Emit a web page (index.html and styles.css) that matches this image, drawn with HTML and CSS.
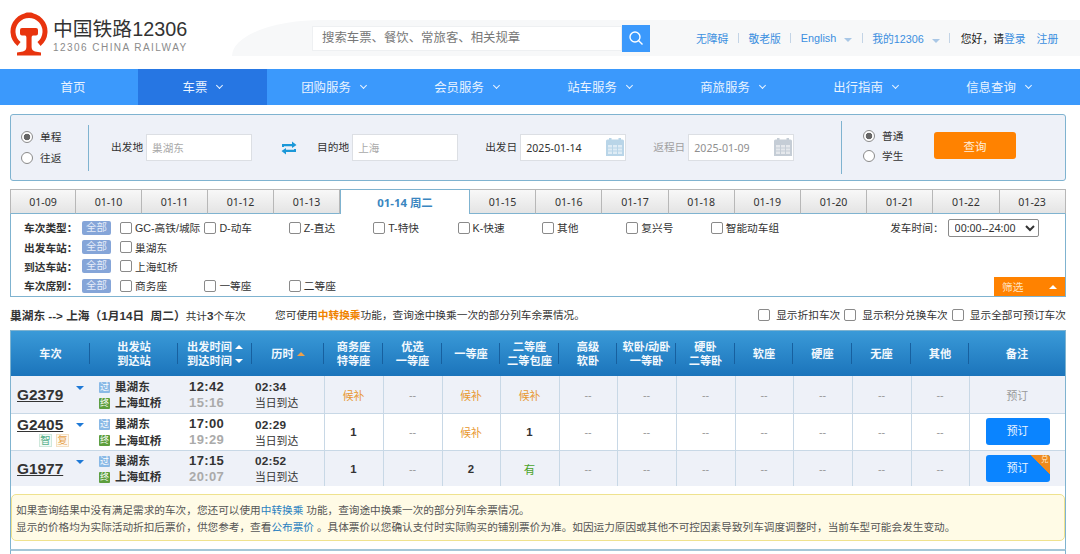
FILE: index.html
```html
<!DOCTYPE html>
<html lang="zh-CN">
<head>
  <meta charset="UTF-8" />
  <title>车票查询 - 中国铁路12306</title>
  <link rel="stylesheet" href="styles.css">
</head>
<body>

  <header class="topbar">
    <a class="logo">
      <svg class="logo-mark" viewBox="0 0 38 44" aria-hidden="true">
        <path d="M9 32 A16 16 0 1 1 29 32" fill="none" stroke="#e8340e" stroke-width="5"/>
        <rect x="14.5" y="0.5" width="9" height="5" rx="2.5" fill="#e8340e"/>
        <path d="M10 18 Q10 16 12 16 H26 Q28 16 28 18 V21.5 Q28 23.5 26 23.5 H23 Q21.6 23.5 21.6 25.5 V35 Q21.6 38.5 25 39.5 L31 40.5 V43.5 H7 V40.5 L13 39.5 Q16.4 38.5 16.4 35 V25.5 Q16.4 23.5 15 23.5 H12 Q10 23.5 10 21.5 Z" fill="#e8340e"/>
      </svg>
      <span class="logo-text">
        <span class="logo-name">中国铁路12306</span>
        <span class="logo-en">12306 CHINA RAILWAY</span>
      </span>
    </a>
    <div class="topbar-band">
      <div class="site-search">
        <input type="text" placeholder="搜索车票、餐饮、常旅客、相关规章" />
        <button type="button" aria-label="搜索">
          <svg viewBox="0 0 16 16" width="16" height="16"><circle cx="7" cy="7" r="5" fill="none" stroke="#fff" stroke-width="1.4"/><path d="M10.7 10.7 L14.5 14.5" stroke="#fff" stroke-width="1.4"/></svg>
        </button>
      </div>
      <div class="top-links">
        <a>无障碍</a><i class="sep"></i>
        <a>敬老版</a><i class="sep"></i>
        <a class="has-caret">English</a><i class="sep"></i>
        <a class="has-caret">我的12306</a><i class="sep"></i>
        <span class="hello">您好，请<a>登录</a></span>
        <a class="reg">注册</a>
      </div>
    </div>
  </header>

  <nav class="mainnav">
    <a>首页</a>
    <a class="active chev">车票</a>
    <a class="chev">团购服务</a>
    <a class="chev">会员服务</a>
    <a class="chev">站车服务</a>
    <a class="chev">商旅服务</a>
    <a class="chev">出行指南</a>
    <a class="chev">信息查询</a>
  </nav>

  <main class="content">

    <section class="query">
      <div class="query-radios">
        <label><input type="radio" name="trip" checked /> 单程</label>
        <label><input type="radio" name="trip" /> 往返</label>
      </div>
      <div class="query-fields">
        <label class="field from">出发地<input type="text" placeholder="巢湖东" /></label>
        <svg class="swap" viewBox="0 0 16 14" width="16" height="14" aria-hidden="true">
          <path d="M1 6 V3 H11 V0.5 L15.5 4 L11 7 V5.2 H3 V6 Z M15 8 V11 H5 V13.5 L0.5 10 L5 7 V8.8 H13 V8 Z" fill="#1b98d8"/>
        </svg>
        <label class="field to">目的地<input type="text" placeholder="上海" /></label>
        <label class="field date">出发日<input type="text" value="2025-01-14" />
          <svg class="cal" viewBox="0 0 20 20" width="20" height="20" aria-hidden="true"><use href="#cal-icon"/></svg>
        </label>
        <label class="field date back">返程日<input type="text" value="2025-01-09" />
          <svg class="cal" viewBox="0 0 20 20" width="20" height="20" aria-hidden="true"><use href="#cal-icon"/></svg>
        </label>
      </div>
      <div class="query-radios kind">
        <label><input type="radio" name="kind" checked /> 普通</label>
        <label><input type="radio" name="kind" /> 学生</label>
      </div>
      <button class="query-btn" type="button">查询</button>
    </section>

    <ul class="datetabs">
      <li>01-09</li><li>01-10</li><li>01-11</li><li>01-12</li><li>01-13</li>
      <li class="active">01-14 周二</li>
      <li>01-15</li><li>01-16</li><li>01-17</li><li>01-18</li><li>01-19</li>
      <li>01-20</li><li>01-21</li><li>01-22</li><li>01-23</li>
    </ul>

    <section class="filter">
      <div class="filter-row">
        <b>车次类型：</b><span class="chip">全部</span>
        <div class="filter-opts">
          <label><input type="checkbox" />GC-高铁/城际</label>
          <label><input type="checkbox" />D-动车</label>
          <label><input type="checkbox" />Z-直达</label>
          <label><input type="checkbox" />T-特快</label>
          <label><input type="checkbox" />K-快速</label>
          <label><input type="checkbox" />其他</label>
          <label><input type="checkbox" />复兴号</label>
          <label><input type="checkbox" />智能动车组</label>
        </div>
        <label class="depart-time">发车时间：
          <select><option>00:00--24:00</option></select>
        </label>
      </div>
      <div class="filter-row">
        <b>出发车站：</b><span class="chip">全部</span>
        <div class="filter-opts"><label><input type="checkbox" />巢湖东</label></div>
      </div>
      <div class="filter-row">
        <b>到达车站：</b><span class="chip">全部</span>
        <div class="filter-opts"><label><input type="checkbox" />上海虹桥</label></div>
      </div>
      <div class="filter-row">
        <b>车次席别：</b><span class="chip">全部</span>
        <div class="filter-opts">
          <label><input type="checkbox" />商务座</label>
          <label><input type="checkbox" />一等座</label>
          <label><input type="checkbox" />二等座</label>
        </div>
      </div>
      <div class="filter-toggle">筛选<i></i></div>
    </section>

    <div class="summary">
      <p class="summary-count"><b>巢湖东 --&gt; 上海（1月14日&nbsp; 周二）</b>共计<b>3</b>个车次</p>
      <p class="summary-tip">您可使用<b>中转换乘</b>功能，查询途中换乘一次的部分列车余票情况。</p>
      <div class="summary-opts">
        <label><input type="checkbox" />显示折扣车次</label>
        <label><input type="checkbox" />显示积分兑换车次</label>
        <label><input type="checkbox" />显示全部可预订车次</label>
      </div>
    </div>

    <div class="results">
      <table class="trains">
        <colgroup>
          <col class="c-no"><col class="c-st"><col class="c-tm"><col class="c-du"><col class="c-s">
          <col class="c-s"><col class="c-s2"><col class="c-s"><col class="c-s2"><col class="c-s">
          <col class="c-s"><col class="c-s2"><col class="c-s"><col class="c-s"><col class="c-s2"><col>
        </colgroup>
        <thead>
          <tr>
            <th>车次</th>
            <th>出发站<br>到达站</th>
            <th class="th-time"><span>出发时间<i class="up"></i><br>到达时间<i class="down"></i></span></th>
            <th>历时<i class="up orange"></i></th>
            <th>商务座<br>特等座</th>
            <th>优选<br>一等座</th>
            <th>一等座</th>
            <th>二等座<br>二等包座</th>
            <th>高级<br>软卧</th>
            <th>软卧/动卧<br>一等卧</th>
            <th>硬卧<br>二等卧</th>
            <th>软座</th>
            <th>硬座</th>
            <th>无座</th>
            <th>其他</th>
            <th class="last">备注</th>
          </tr>
        </thead>
        <tbody>
          <tr class="odd">
            <td class="no"><div class="no-line"><a>G2379</a><i class="drop"></i></div></td>
            <td class="st"><div><i class="tag pass">过</i>巢湖东</div><div><i class="tag end">终</i>上海虹桥</div></td>
            <td class="tm"><strong>12:42</strong><em>15:16</em></td>
            <td class="du"><strong>02:34</strong><span>当日到达</span></td>
            <td class="wait">候补</td><td>--</td><td class="wait">候补</td><td class="wait">候补</td>
            <td>--</td><td>--</td><td>--</td><td>--</td><td>--</td><td>--</td><td>--</td>
            <td class="off">预订</td>
          </tr>
          <tr>
            <td class="no"><div class="no-line"><a>G2405</a><i class="drop"></i></div>
              <div class="marks"><i class="mark zhi">智</i><i class="mark fu">复</i></div></td>
            <td class="st"><div><i class="tag pass">过</i>巢湖东</div><div><i class="tag end">终</i>上海虹桥</div></td>
            <td class="tm"><strong>17:00</strong><em>19:29</em></td>
            <td class="du"><strong>02:29</strong><span>当日到达</span></td>
            <td class="num">1</td><td>--</td><td class="wait">候补</td><td class="num">1</td>
            <td>--</td><td>--</td><td>--</td><td>--</td><td>--</td><td>--</td><td>--</td>
            <td><a class="book">预订</a></td>
          </tr>
          <tr class="odd">
            <td class="no"><div class="no-line"><a>G1977</a><i class="drop"></i></div></td>
            <td class="st"><div><i class="tag pass">过</i>巢湖东</div><div><i class="tag end">终</i>上海虹桥</div></td>
            <td class="tm"><strong>17:15</strong><em>20:07</em></td>
            <td class="du"><strong>02:52</strong><span>当日到达</span></td>
            <td class="num">1</td><td>--</td><td class="num">2</td><td class="have">有</td>
            <td>--</td><td>--</td><td>--</td><td>--</td><td>--</td><td>--</td><td>--</td>
            <td><a class="book points">预订<i>兑</i></a></td>
          </tr>
        </tbody>
      </table>

      <div class="notice">
        <p>如果查询结果中没有满足需求的车次，您还可以使用<a>中转换乘</a> 功能，查询途中换乘一次的部分列车余票情况。</p>
        <p>显示的价格均为实际活动折扣后票价，供您参考，查看<a>公布票价</a> 。具体票价以您确认支付时实际购买的铺别票价为准。如因运力原因或其他不可控因素导致列车调度调整时，当前车型可能会发生变动。</p>
      </div>
    </div>
    <div class="more"></div>
  </main>

  <svg class="sprite" aria-hidden="true">
    <symbol id="cal-icon" viewBox="0 0 20 20">
      <path d="M1 4 Q1 2.5 2.5 2.5 H4 V1 H6.5 V2.5 H13.5 V1 H16 V2.5 H17.5 Q19 2.5 19 4 V19 H1 Z" fill="currentColor"/>
      <path d="M3 8 H17 V17 H3 Z" fill="#fff" opacity=".55"/>
      <path d="M3 11 H17 M3 14 H17 M7.5 8 V17 M12.5 8 V17" stroke="currentColor" stroke-width="1"/>
    </symbol>
  </svg>

</body>
</html>
```

FILE: styles.css
```css
/* base */
*, *::before, *::after { box-sizing: border-box; }

html, body {
  margin: 0; padding: 0; height: 554px;
  overflow: hidden;
  background: #fff;
  font-family: "Liberation Sans", "Noto Sans CJK SC", sans-serif;
  font-size: 10.8px;
  color: #333;
}
p { margin: 0; }
i, em { font-style: normal; }
.sprite { width: 0; height: 0; display: block; overflow: hidden; }

input[type="radio"], input[type="checkbox"] {
  appearance: none;
  margin: 0;
  background: #fff;
  border: 1px solid #8a8a8a;
  flex: none;
}
input[type="radio"] { width: 12px; height: 12px; border-radius: 50%; }
input[type="radio"]:checked { background: radial-gradient(circle, #666 0 3px, #fff 3.6px); }
input[type="checkbox"] { width: 12px; height: 12px; border-radius: 2px; }

/* header */
.topbar { height: 69px; display: flex; align-items: flex-start; }
.logo { display: flex; gap: 5px; padding: 12px 0 0 10px; width: 232px; flex: none; }
.logo-mark { width: 38px; height: 44px; flex: none; }
.logo-text { display: flex; flex-direction: column; }
.logo-name { font-size: 19.8px; line-height: 24px; color: #333; margin-top: 5px; white-space: nowrap; }
.logo-en { font-size: 10px; line-height: 12px; letter-spacing: 1.45px; color: #8b8b8b; margin-top: 1px; white-space: nowrap; }

.topbar-band {
  flex: 1;
  height: 36px;
  margin-top: 20px;
  padding-left: 80px;
  display: flex;
  align-items: center;
  background: #f7f8f9;
  border-top-left-radius: 90px 36px;
}
.site-search { display: flex; width: 338px; height: 27px; flex: none; }
.site-search input {
  width: 310px; height: 25px; margin-top: 1px; padding: 0 9px;
  border: 1px solid #eef0f2; outline: none; background: #fff;
  font: 12.4px "Liberation Sans", "Noto Sans CJK SC", sans-serif;
}
.site-search input::placeholder { color: #777; }
.site-search button { width: 28px; height: 27px; padding: 0; border: none; background: #3b99fc; display: flex; align-items: center; justify-content: center; }

.top-links { margin-left: 46px; display: flex; align-items: center; font-size: 10.8px; white-space: nowrap; }
.top-links a { color: #3b8fe0; }
.top-links .sep { width: 1px; height: 10px; background: #c3d4e6; margin: 0 9.5px; }
.top-links .has-caret::after {
  content: ""; display: inline-block; margin-left: 8px; vertical-align: 0;
  border: 4.5px solid transparent; border-top: 4px solid #a9c7e6; border-bottom: 0;
}
.top-links .hello { color: #222; margin-left: 1px; }
.top-links .reg { margin-left: 11px; }

/* main nav */
.mainnav {
  height: 36px;
  padding-left: 8px;
  display: grid;
  grid-template-columns: 130px 129px repeat(6, 133px);
  background: #3b99fc;
  color: #fff;
  font-size: 12.4px;
}
.mainnav a { display: flex; align-items: center; justify-content: center; color: #e9f3ff; }
.mainnav .active { background: #2676e3; }
.mainnav .chev::after {
  content: ""; width: 5px; height: 5px; margin: -3px 0 0 10px;
  border-right: 1.2px solid #e9f3ff; border-bottom: 1.2px solid #e9f3ff;
  transform: rotate(45deg);
}

/* content column */
.content { padding: 9px 14px 0 10px; }

/* query panel */
.query {
  height: 67px;
  display: flex;
  align-items: center;
  background: #eef1f8;
  border: 1px solid #7fb3d0;
  border-radius: 3px;
  position: relative;
}
.query label { display: flex; align-items: center; white-space: nowrap; font-size: 10.7px; line-height: 15px; }
.query-radios { width: 78px; height: 46px; padding-left: 10px; display: flex; flex-direction: column; justify-content: center; gap: 6px; border-right: 1px solid #7fb3d0; flex: none; }
.query-radios input { margin-right: 7px; }
.query-radios.kind { border: none; border-left: 1px solid #7fb3d0; width: 92px; height: 53px; padding: 0 0 3px 21px; gap: 5px; flex: none; }
.query-fields { display: flex; align-items: center; width: 752px; padding-left: 22px; flex: none; }
.field { position: relative; }
.field input {
  width: 106px; height: 27px; margin-left: 3px; padding: 0 5px;
  border: 1px solid #dcdfe4; outline: none; background: #fff; color: #333;
  font: 10.6px "Noto Sans", "Noto Sans CJK SC", sans-serif;
}
.field input::placeholder { color: #a9a9a9; }
.swap { margin: 0 20px 0 29px; flex: none; }
.field.date { margin-left: 27px; color: #333; }
.field.date.back { margin-left: 27px; color: #a0a0a0; }
.field.back input { color: #8f8f8f; }
.cal { position: absolute; right: 1px; top: 3px; color: #b9d5e8; }
.back .cal { color: #c5cdd6; }
.query-btn {
  width: 82px; height: 27px; margin: -4px 0 0 1px; padding: 0;
  border: none; border-radius: 3px; background: #ff8200; color: #ffeeda;
  font: 11.5px "Noto Sans CJK SC", sans-serif;
}

/* date tabs */
.datetabs {
  list-style: none; margin: 8px 0 0; padding: 0;
  height: 25px;
  display: grid;
  grid-template-columns: repeat(5, 66px) 130px repeat(9, 66.2px);
  font: 10.6px "Noto Sans", "Noto Sans CJK SC", sans-serif;
  color: #333;
}
.datetabs li {
  display: flex; align-items: center; justify-content: center;
  background: linear-gradient(#f8f8f8, #e4e4e4);
  border: 1px solid #b7b7b7; border-left: 0; border-bottom: 1px solid #7fb3d0;
}
.datetabs li:first-child { border-left: 1px solid #b7b7b7; }
.datetabs .active {
  background: #fff; color: #3a86c0; font-weight: 700; font-size: 11.4px;
  border: 1px solid #7fb3d0; border-bottom: 0;
}

/* filter */
.filter {
  height: 83px; padding: 4px 0 0 13px;
  position: relative;
  border: 1px solid #7fb3d0; border-top: 0;
  font-size: 10.7px;
}
.filter-row { height: 19.4px; display: flex; align-items: center; white-space: nowrap; }
.filter-row b { width: 58px; flex: none; color: #333; }
.chip { width: 29px; height: 14px; flex: none; border-radius: 2px; background: #85a5d8; color: #e4ecf8; text-align: center; line-height: 14px; font-size: 10.4px; }
.filter-opts { margin-left: 9px; display: grid; grid-template-columns: repeat(8, 84.4px); }
.filter-opts label { display: flex; align-items: center; gap: 3px; }
.depart-time { margin-left: 95px; display: flex; align-items: center; gap: 0; }
.depart-time select { width: 91px; height: 18px; margin-left: 4px; padding: 0 0 0 2px; font: 10.6px "Noto Sans", sans-serif; color: #333; background: #fff; border: 1px solid #8a8a8a; border-radius: 2px; }
.filter-toggle {
  position: absolute; right: 0; bottom: 0;
  width: 71px; height: 19px; padding: 0 8px;
  display: flex; align-items: center; justify-content: space-between;
  background: #ff8200; color: #ffe3c2;
}
.filter-toggle i { border: 4px solid transparent; border-bottom: 4px solid #fff; border-top: 0; }

/* summary */
.summary { height: 33px; padding-top: 2px; display: flex; align-items: center; white-space: nowrap; font-size: 10.7px; }
.summary-count { width: 265px; flex: none; }
.summary-count b { font-weight: 700; font-size: 11.7px; }
.summary-tip b { color: #f08300; }
.summary-opts { margin-left: auto; display: flex; gap: 4px; }
.summary-opts label { display: flex; align-items: center; gap: 6px; }

/* result table */
.results { border-left: 1px solid #7fb3d0; border-right: 1px solid #7fb3d0; border-top: 1px solid #7fb3d0; padding-bottom: 8px; }
.trains { width: 100%; border-collapse: collapse; table-layout: fixed; }
.c-no { width: 79px; }
.c-st { width: 88px; }
.c-tm { width: 74px; }
.c-du { width: 72px; }
.c-s { width: 59px; }
.c-s2 { width: 58px; }

.trains th {
  height: 45px; padding: 0;
  position: relative;
  background: linear-gradient(#3a9ad8, #1b74bb);
  color: #f2f8fd;
  font-size: 11.2px; line-height: 14px; font-weight: 700;
  white-space: nowrap;
}
.trains th:not(.last)::after {
  content: ""; position: absolute; right: 0; top: 12px;
  width: 1px; height: 21px; background: #17609f;
}
.th-time span { display: inline-block; text-align: left; }
.trains .up, .trains .down { display: inline-block; margin-left: 3px; vertical-align: 2px; border: 4px solid transparent; border-top: 0; border-bottom: 4px solid #fff; }
.trains .down { border-bottom: 0; border-top: 4px solid #fff; }
.trains .orange { border-bottom-color: #f0a14a; }

.trains td {
  height: 37px; padding: 1px 0 0;
  text-align: center;
  color: #999;
  border-right: 1px solid #c8d8e6;
  border-bottom: 1px solid #c8d8e6;
  background: #fff;
  font-size: 10.8px;
}
.trains td:last-child { border-right: 0; }
.trains .odd td { background: #eef1f8; }
.trains tbody tr:last-child td { height: 36px; border-bottom: 0; }

.trains .wait { color: #e8962e; }
.trains .num { color: #333; font-weight: 700; font-size: 11.4px; }
.trains .have { color: #4aa32a; font-size: 11.4px; }
.trains .off { color: #999; }

.trains .no { text-align: left; padding: 0 0 0 6px; vertical-align: middle; border-right: 0; }
.no-line { display: flex; align-items: flex-start; }
.no-line a { width: 58.5px; font-size: 15.4px; line-height: 18px; font-weight: 700; color: #333; text-decoration: underline; flex: none; }
.drop { border: 4px solid transparent; border-top: 4px solid #1e79d6; border-bottom: 0; margin-top: 7px; border-left-width: 4.5px; border-right-width: 4.5px; }
.odd .no-line .drop { margin-top: 2px; }
.odd .no-line a { padding-top: 2px; height: 20px; }
.marks { display: flex; gap: 4px; margin: 0 0 0 22px; height: 13px; }
.mark { width: 13px; height: 13px; font-size: 10.4px; line-height: 12px; text-align: center; border: 1px solid; }
.mark.zhi { color: #55b08b; border-color: #cfe8dc; background: #f3faf6; }
.mark.fu { color: #e7a24a; border-color: #f5e0c2; background: #fdf8ef; }

.trains .st { text-align: left; padding: 2px 0 0 9px; color: #333; font-weight: 700; font-size: 11.6px; line-height: 16.5px; border-right: 0; }
.st div { display: flex; align-items: center; white-space: nowrap; }
.tag { width: 11px; height: 11px; margin-right: 5px; border-radius: 1px; color: #fff; font-size: 9px; line-height: 11px; text-align: center; font-weight: 400; flex: none; }
.tag.pass { background: #8ab9e6; }
.tag.end { background: #5d9e3d; }

.trains .tm { text-align: left; padding: 1px 0 0 11px; border-right: 0; }
.tm strong, .tm em { display: block; font-size: 13px; letter-spacing: .4px; line-height: 16px; font-weight: 700; }
.tm strong { color: #333; }
.tm em { color: #aaa; }

.trains .du { text-align: left; padding: 2px 0 0 3px; color: #333; }
.du strong { display: block; font-size: 11.8px; line-height: 16px; letter-spacing: .2px; }
.du span { display: block; font-size: 10.8px; line-height: 16px; }

.book {
  display: block; width: 64px; height: 27px; margin: -1px auto 0 16px;
  position: relative; overflow: hidden;
  line-height: 27px; text-align: center;
  background: #0a84ff; color: #eaf4ff; border-radius: 3px;
}
.points i {
  position: absolute; right: 0; top: 0;
  width: 19px; height: 19px;
  background: linear-gradient(45deg, transparent 50%, #f08a1d 50%);
  color: #ffe9c8; font-size: 7.5px; line-height: 10px; text-align: right; padding-right: 1px;
}

/* notice */
.notice {
  margin-top: 8px; height: 47px; padding: 7px 4px 0;
  background: #fffbe6;
  border: 1px solid #efe28e;
  border-radius: 5px;
  font-size: 10.65px; line-height: 17px;
  color: #555;
  white-space: nowrap;
  overflow: hidden;
}
.notice a { color: #2a7fc0; }

.more { border: 1px solid #7fb3d0; border-top: 2px solid #a3c6d8; height: 20px; }
```
